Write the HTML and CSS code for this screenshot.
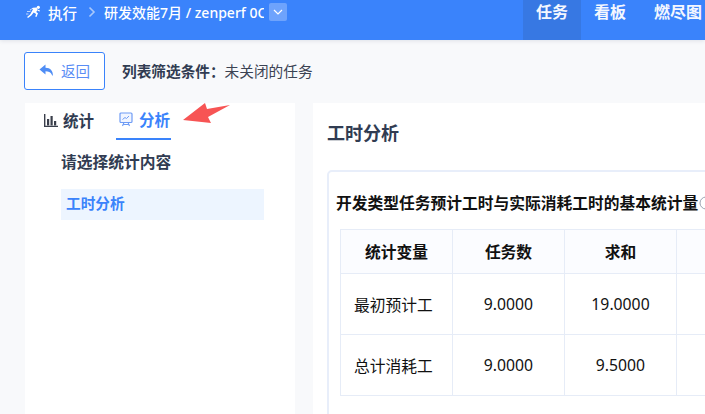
FILE: index.html
```html
<!DOCTYPE html>
<html lang="zh-CN">
<head>
<meta charset="utf-8">
<title>工时分析</title>
<link rel="stylesheet" href="styles.css">
</head>
<body>
<div class="page">
  <header class="topbar">
    <div class="crumbs">
      <svg class="run-icon" width="15" height="15" viewBox="0 0 15 15"><circle cx="12.300" cy="2.300" r="1.600" fill="#fff"/><path d="M7 2.800l3.500-.4 1.200 2.300-1.500 2.300 1.800 1.300-1.500 3.700-1.300-.5.900-2.500-2.400-1.500-2.400 2.900-3.300 2.700-.9-1 3-2.700 3-5.500-1.600.3-1 1.300-.9-.6z" fill="#fff"/><path d="M12 4.800l2 .8-.4 1-2.200-.8z" fill="#fff"/><path d="M1 6.500h3.500M0 9h2.500" stroke="#bcd4ff" stroke-width="1"/></svg>
      <span class="crumb-root">执行</span>
      <svg class="crumb-sep" width="8" height="12" viewBox="0 0 8 12"><path d="M1.500 1.500L6 6l-4.500 4.500" fill="none" stroke="#a9c8fb" stroke-width="1.600"/></svg>
      <span class="crumb-name">研发效能7月 / zenperf 0CR</span>
      <span class="crumb-btn"><svg width="10" height="6" viewBox="0 0 10 6"><path d="M1 1l4 4 4-4" fill="none" stroke="#fff" stroke-width="1.200"/></svg></span>
    </div>
    <nav class="tabs-main">
      <a class="tab-main is-active">任务</a>
      <a class="tab-main">看板</a>
      <a class="tab-main">燃尽图</a>
    </nav>
  </header>

  <div class="toolbar">
    <button class="back-btn">
      <svg width="15" height="13" viewBox="0 0 15 13"><path d="M6.500 0.500L0.500 5.500l6 5V7.300c3 0 5 .7 6.500 3.700l.9 1c.2-5-2.400-8.200-7.400-8.200z" fill="#4f8df5"/></svg>
      <span>返回</span>
    </button>
    <p class="filter"><strong>列表筛选条件：</strong>未关闭的任务</p>
  </div>

  <main class="content">
    <aside class="side">
      <div class="side-tabs">
        <a class="side-tab">
          <svg width="14" height="13" viewBox="0 0 14 13"><path d="M0.700 0v12.500H14" fill="none" stroke="#3a3f4b" stroke-width="1.400"/><path d="M3 5h2.200v6.500H3zM6.500 2h2.200v9.500H6.500zM10 7h2.200v4.500H10z" fill="#3a3f4b"/></svg>
          <span>统计</span>
        </a>
        <a class="side-tab is-active">
          <svg width="14" height="15" viewBox="0 0 14 15"><rect x="1" y="1" width="12" height="9.500" rx="1" fill="#f1f5ff" stroke="#6f9cf5" stroke-width="1.200"/><path d="M3.500 7.500l2.500-2 1.500 1 2.500-2.500" fill="none" stroke="#6f9cf5"/><path d="M5 10.500L3.500 14M9 10.500l1.500 3.500M3.500 12.500h7" fill="none" stroke="#6f9cf5" stroke-width="1.100"/></svg>
          <span>分析</span>
        </a>
      </div>
      <h3 class="side-title">请选择统计内容</h3>
      <a class="side-item">工时分析</a>
    </aside>

    <section class="panel">
      <h2 class="panel-title">工时分析</h2>
      <div class="card">
        <h4 class="card-title">开发类型任务预计工时与实际消耗工时的基本统计量<svg class="info" width="14" height="14" viewBox="0 0 14 14"><circle cx="7" cy="7" r="6" fill="none" stroke="#9aa3b2"/></svg></h4>
        <table class="stats">
          <thead>
            <tr><th>统计变量</th><th>任务数</th><th>求和</th><th></th></tr>
          </thead>
          <tbody>
            <tr><td class="label">最初预计工</td><td>9.0000</td><td>19.0000</td><td></td></tr>
            <tr><td class="label">总计消耗工</td><td>9.0000</td><td>9.5000</td><td></td></tr>
          </tbody>
        </table>
      </div>
    </section>
  </main>

  <svg class="arrow" width="52" height="24" viewBox="0 0 52 24"><polygon points="1,18 23,1 25,7 48,3 26,15 29,21" fill="#f75454"/></svg>
</div>
</body>
</html>
```

FILE: styles.css
```css
* { box-sizing: border-box; }

html, body {
  margin: 0;
  height: 100%;
  overflow: hidden;
}

body {
  background: #f8f9fb;
  font-family: "Noto Sans", "Noto Sans CJK SC", sans-serif;
  color: #313c52;
}

.page {
  position: relative;
  width: 705px;
  height: 414px;
  overflow: hidden;
}

.topbar {
  display: flex;
  justify-content: space-between;
  height: 40px;
  width: 705px;
  background: #3a83fb;
  color: #fff;
  box-shadow: 0 1px 4px rgba(40, 60, 100, 0.12);
  position: relative;
}

.crumbs {
  display: flex;
  align-items: center;
  height: 24px;
  padding-left: 26px;
  font-size: 14.500px;
}

.run-icon { margin-right: 7px; }

.crumb-root { font-weight: 500; }

.crumb-sep { margin: 0 8px 0 11px; }

.crumb-name {
  display: block;
  width: 160px;
  font-size: 14px;
  white-space: nowrap;
  overflow: hidden;
  font-weight: 500;
}

.crumb-btn {
  display: flex;
  align-items: center;
  justify-content: center;
  width: 18px;
  height: 18px;
  margin-left: 5px;
  border-radius: 2px;
  background: #6ea3fc;
}

.tabs-main {
  display: flex;
  margin-right: 4px;
}

.tab-main {
  width: 58px;
  padding-top: 1px;
  height: 40px;
  line-height: 23px;
  font-size: 16px;
  font-weight: 700;
  text-align: center;
  white-space: nowrap;
  color: #f4f7ff;
}

.tab-main:last-child { width: 62px; padding-left: 15px; text-align: left; }

.tab-main.is-active { background: #3778e3; }

.toolbar {
  display: flex;
  align-items: center;
  height: 63px;
  padding: 0 24px 2px;
}

.back-btn {
  display: flex;
  align-items: center;
  justify-content: center;
  gap: 7px;
  width: 81px;
  height: 38px;
  padding: 0;
  border: 1px solid #3a83fb;
  border-radius: 3px;
  background: #fff;
  color: #5a8df5;
  font: inherit;
  font-size: 14.500px;
}

.filter {
  margin: 0 0 0 17px;
  font-size: 14.670px;
  color: #3b4353;
}

.filter strong { font-weight: 700; color: #313c52; }

.content {
  display: flex;
  align-items: stretch;
  gap: 18px;
  height: 311px;
  padding-left: 25px;
}

.side {
  flex: 0 0 270px;
  background: #fff;
}

.side-tabs {
  display: flex;
  gap: 22px;
  padding-left: 19px;
  height: 37px;
}

.side-tab {
  display: flex;
  align-items: center;
  gap: 5px;
  height: 37px;
  padding-bottom: 3px;
  font-size: 15.500px;
  font-weight: 700;
  color: #313c52;
}

.side-tab.is-active {
  width: 55px;
  gap: 6px;
  padding-left: 3px;
  color: #3a83fb;
  border-bottom: 2px solid #3a83fb;
}

.side-title {
  margin: 11px 0 0 36px;
  line-height: 22px;
  font-size: 15.750px;
  font-weight: 700;
  color: #313c52;
}

.side-item {
  display: block;
  width: 203px;
  height: 31px;
  margin: 16px 0 0 36px;
  padding-left: 5px;
  line-height: 29px;
  background: #edf5ff;
  color: #3a83fb;
  font-size: 14.670px;
  font-weight: 700;
}

.panel {
  flex: 1 0 auto;
  width: 392px;
  padding: 17px 0 0 14px;
  background: #fff;
}

.panel-title {
  margin: 0;
  line-height: 26px;
  font-size: 18px;
  font-weight: 700;
  color: #313c52;
}

.card {
  width: 620px;
  height: 300px;
  margin-top: 24px;
  padding: 19px 0 0 11px;
  border: 2px solid #e8eefa;
  border-radius: 5px;
}

.card-title {
  display: flex;
  align-items: center;
  margin: 0 0 0 -4px;
  line-height: 24px;
  font-size: 15.750px;
  font-weight: 700;
  color: #111;
  white-space: nowrap;
}

.info { margin-left: 1px; }

.stats {
  table-layout: fixed;
  width: 449px;
  margin-top: 14px;
  border-collapse: collapse;
  font-size: 15.750px;
  color: #111;
}

.stats th,
.stats td {
  width: 112px;
  border: 1px solid #e6ecf7;
  text-align: center;
  font-weight: 400;
}

.stats th {
  height: 44px;
  background: #fbfcff;
  font-weight: 700;
}

.stats td { height: 61px; }

.stats td.label {
  padding-left: 13px;
  text-align: left;
  white-space: nowrap;
}

.arrow {
  position: absolute;
  left: 182px;
  top: 102px;
}
```
